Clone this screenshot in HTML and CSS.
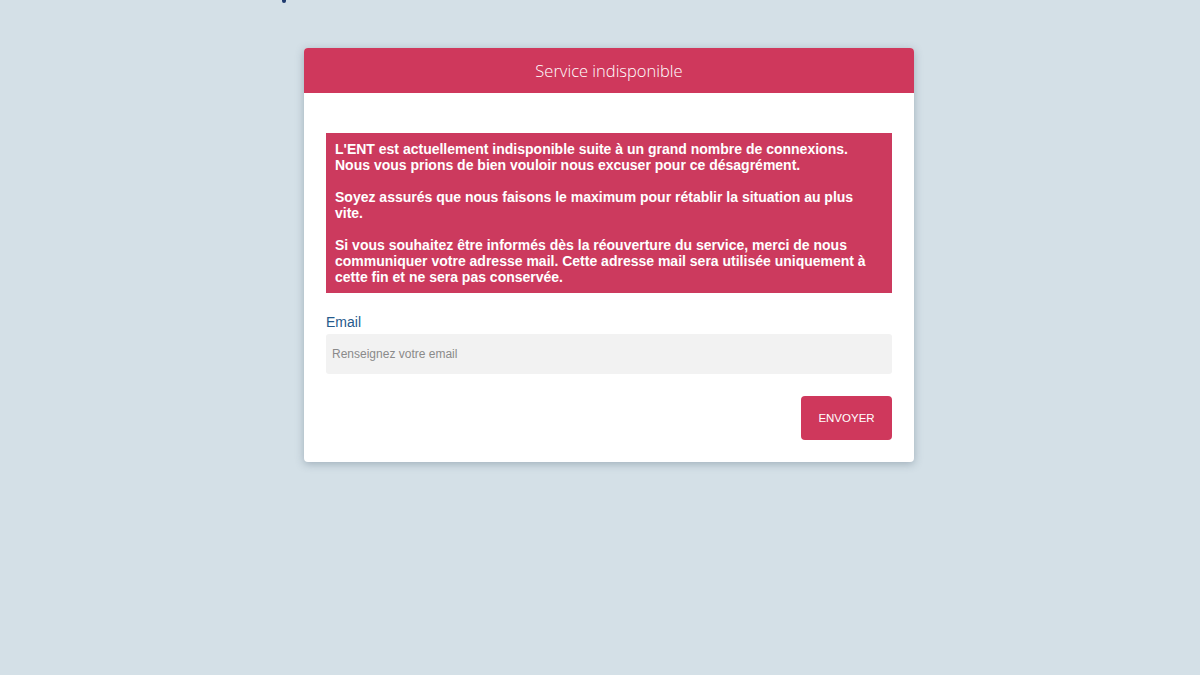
FILE: index.html
```html
<!DOCTYPE html>
<html lang="fr">
<head>
<meta charset="utf-8">
<title>Service indisponible</title>
<link rel="stylesheet" href="styles.css">
</head>
<body>
<div class="topmark"><span class="mark"></span></div>
<main class="page">
  <section class="card">
    <header class="card-header">Service indisponible</header>
    <div class="card-body">
      <div class="alert">
        <p>L'ENT est actuellement indisponible suite à un grand nombre de connexions. Nous vous prions de bien vouloir nous excuser pour ce désagrément.</p>
        <p>Soyez assurés que nous faisons le maximum pour rétablir la situation au plus vite.</p>
        <p>Si vous souhaitez être informés dès la réouverture du service, merci de nous communiquer votre adresse mail. Cette adresse mail sera utilisée uniquement à cette fin et ne sera pas conservée.</p>
      </div>
      <form class="form">
        <label class="label" for="email">Email</label>
        <input class="input" id="email" type="email" placeholder="Renseignez votre email">
        <div class="actions">
          <button class="btn" type="button">ENVOYER</button>
        </div>
      </form>
    </div>
  </section>
</main>
</body>
</html>
```
FILE: styles.css
```css
* { box-sizing: border-box; }
html, body { margin: 0; padding: 0; }
body {
  background: #d4e0e7;
  font-family: "Liberation Sans", Arial, sans-serif;
  min-height: 675px;
}
.topmark { height: 48px; padding-left: 282px; }
.mark { display: block; width: 4px; height: 3px; background: #1f3a6e; border-radius: 0 0 2px 2px; }
.page { display: flex; justify-content: center; padding-left: 18px; }
.card {
  width: 610px;
  background: #fff;
  border-radius: 4px;
  box-shadow: 0 2px 8px rgba(60, 80, 100, 0.35);
  overflow: hidden;
}
.card-header {
  background: #cf385c;
  color: #fff;
  height: 45px;
  display: flex;
  align-items: center;
  justify-content: center;
  font-family: "Open Sans", "Liberation Sans", sans-serif;
  font-weight: 300;
  font-size: 16.5px;
}
.card-body { padding: 40px 22px 22px; }
.alert {
  background: #cc3a5e;
  color: #fff;
  font-weight: bold;
  font-size: 14px;
  line-height: 16px;
  padding: 8px 9px 8px;
}
.alert p { margin: 0 0 16px; }
.alert p:last-child { margin-bottom: 0; }
.form { display: flex; flex-direction: column; margin-top: 21px; }
.label { color: #265a8c; font-size: 14px; line-height: 16px; margin-bottom: 4px; }
.input {
  height: 40px;
  border: none;
  background: #f2f2f2;
  border-radius: 3px;
  padding: 0 6px;
  font-family: "Liberation Sans", Arial, sans-serif;
  font-size: 12px;
  color: #333;
}
.input::placeholder { color: #8a8a8a; }
.actions { display: flex; justify-content: flex-end; margin-top: 22px; }
.btn {
  width: 91px;
  height: 44px;
  background: #cf385c;
  color: #fff;
  border: none;
  border-radius: 4px;
  font-family: "Liberation Sans", Arial, sans-serif;
  font-size: 11.5px;
}
```
